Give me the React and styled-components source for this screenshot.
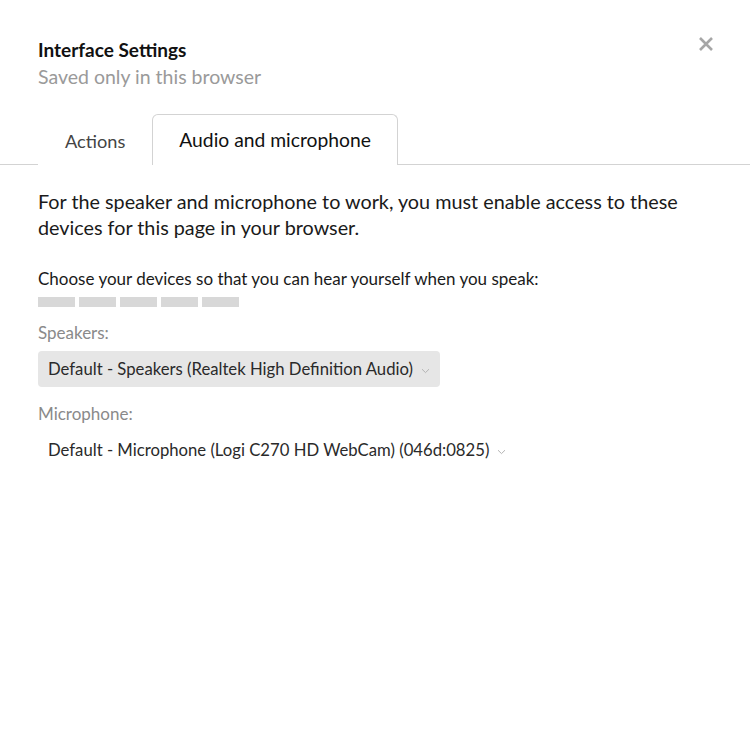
import React, { useState } from 'react';
import styled, { createGlobalStyle } from 'styled-components';

const GlobalStyle = createGlobalStyle`
  body {
    margin: 0;
    background: #ffffff;
    font-family: Lato, "Noto Sans", sans-serif;
    color: #1a1a1a;
  }
`;

const Panel = styled.div`
  width: 750px;
  height: 750px;
  background: #ffffff;
`;

// ==========================
const Header = styled.div`
  display: flex;
  justify-content: space-between;
  align-items: flex-start;
  padding: 38px 34px 0 38px;
`;

const Title = styled.div`
  font-size: 19px;
  font-weight: 700;
  line-height: 24px;
  color: #111;
`;

const Subtitle = styled.div`
  margin-top: 2px;
  font-size: 19.5px;
  line-height: 26px;
  color: #9a9a9a;
`;

const CloseButton = styled.button`
  border: none;
  background: none;
  padding: 0;
  width: 20px;
  height: 20px;
  margin-top: -4px;
  cursor: pointer;
  display: flex;
  align-items: center;
  justify-content: center;
`;

// ==========================
const TabBar = styled.div`
  display: flex;
  padding-left: 38px;
  margin-top: 24px;
  border-bottom: 1px solid #d3d3d3;
`;

const Tab = styled.div`
  height: 48px;
  padding: 0 26px;
  display: flex;
  align-items: center;
  font-size: ${props => (props.active ? '19.3px' : '18.2px')};
  color: ${props => (props.active ? '#111' : '#444')};
  background: #ffffff;
  border: 1px solid ${props => (props.active ? '#d3d3d3' : 'transparent')};
  border-bottom: none;
  border-radius: 6px 6px 0 0;
  margin-bottom: -1px;
  padding-bottom: ${props => (props.active ? '2px' : '0')};
  padding-top: ${props => (props.active ? '0' : '2px')};
  cursor: pointer;
`;

// ==========================
const Content = styled.div`
  padding: 23px 38px 0 38px;
`;

const Notice = styled.p`
  margin: 0;
  font-size: 19.8px;
  line-height: 26px;
  color: #1a1a1a;
`;

const Hint = styled.div`
  margin-top: 28px;
  font-size: 17px;
  line-height: 22px;
  color: #1a1a1a;
`;

const Meter = styled.div`
  display: flex;
  gap: 4px;
  margin-top: 7px;
`;

const MeterBar = styled.div`
  width: 37px;
  height: 10px;
  background: ${props => (props.lit ? '#6ab04c' : '#d8d8d8')};
`;

const FieldLabel = styled.div`
  margin-top: ${props => props.top}px;
  font-size: 17px;
  line-height: 22px;
  color: #8a8a8a;
`;

const Select = styled.div`
  display: inline-flex;
  align-items: center;
  gap: 8px;
  height: 36px;
  padding: 0 10px;
  margin-top: 7px;
  border-radius: 4px;
  font-size: 16.7px;
  color: #2a2a2a;
  background: ${props => (props.filled ? '#e6e6e6' : 'transparent')};
  cursor: pointer;
`;

const Chevron = () => (
  <svg width="9" height="6" viewBox="0 0 9 6" style={{ marginTop: 3 }}>
    <path d="M1 1.2 L4.5 4.6 L8 1.2" fill="none" stroke="#b4b4b4" strokeWidth="1" />
  </svg>
);

const levels = [0, 0, 0, 0, 0];

export default function App() {
  const [tab, setTab] = useState('audio');

  return (
    <Panel>
      <GlobalStyle />
      <Header>
        <div>
          <Title>Interface Settings</Title>
          <Subtitle>Saved only in this browser</Subtitle>
        </div>
        <CloseButton aria-label="Close">
          <svg width="16" height="16" viewBox="0 0 16 16">
            <path d="M2 2 L14 14 M14 2 L2 14" stroke="#a6a6a6" strokeWidth="2.6" />
          </svg>
        </CloseButton>
      </Header>

      <TabBar>
        <Tab active={tab === 'actions'} onClick={() => setTab('actions')}>Actions</Tab>
        <Tab active={tab === 'audio'} onClick={() => setTab('audio')}>Audio and microphone</Tab>
      </TabBar>

      <Content>
        <Notice>
          For the speaker and microphone to work, you must enable access to these devices for this page in your browser.
        </Notice>
        <Hint>Choose your devices so that you can hear yourself when you speak:</Hint>
        <Meter>
          {levels.map((v, i) => (
            <MeterBar key={i} lit={v > 0} />
          ))}
        </Meter>

        <FieldLabel top={15}>Speakers:</FieldLabel>
        <Select filled>
          Default - Speakers (Realtek High Definition Audio) <Chevron />
        </Select>

        <FieldLabel top={16}>Microphone:</FieldLabel>
        <Select>
          Default - Microphone (Logi C270 HD WebCam) (046d:0825) <Chevron />
        </Select>
      </Content>
    </Panel>
  );
}
